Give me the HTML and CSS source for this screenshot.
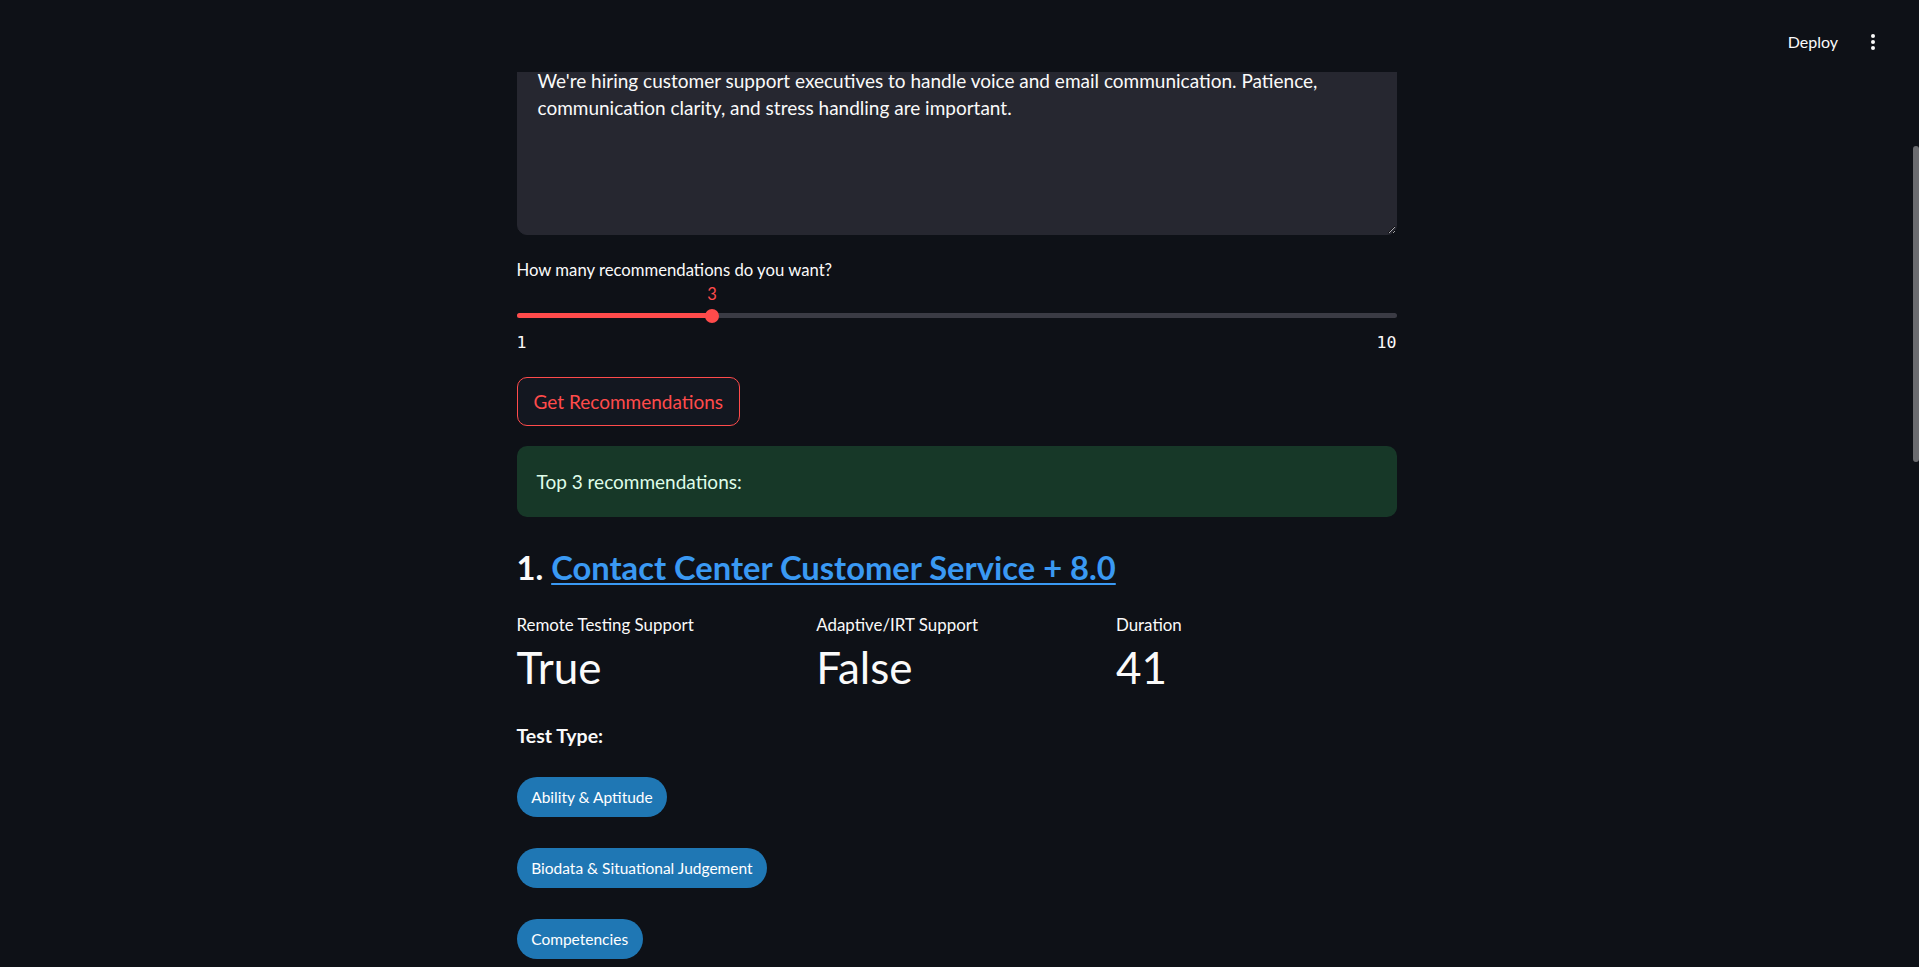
FILE: index.html
```html
<!DOCTYPE html>
<html lang="en">
<head>
<meta charset="utf-8">
<title>Assessment Recommender</title>
<link rel="stylesheet" href="styles.css">
</head>
<body>
<div class="app">
  <header class="topbar">
    <span class="deploy">Deploy</span>
    <svg class="kebab" width="24" height="24" viewBox="0 0 24 24" aria-hidden="true">
      <circle cx="12" cy="6" r="2" fill="#fafafa"/>
      <circle cx="12" cy="12" r="2" fill="#fafafa"/>
      <circle cx="12" cy="18" r="2" fill="#fafafa"/>
    </svg>
  </header>
  <main class="main">
    <div class="block">
      <textarea class="textarea" readonly>We're hiring customer support executives to handle voice and email communication. Patience, communication clarity, and stress handling are important.</textarea>

      <label class="label">How many recommendations do you want?</label>
      <div class="slider">
        <div class="track">
          <div class="fill" style="width:22.22%"></div>
          <div class="thumb" style="left:22.22%"><span class="thumb-value">3</span></div>
        </div>
        <div class="ticks"><span>1</span><span>10</span></div>
      </div>

      <button class="btn">Get Recommendations</button>

      <div class="alert">Top 3 recommendations:</div>

      <h3 class="title">1. <a class="title-link" href="#">Contact Center Customer Service + 8.0</a></h3>

      <div class="metrics">
        <div class="metric">
          <div class="metric-label">Remote Testing Support</div>
          <div class="metric-value">True</div>
        </div>
        <div class="metric">
          <div class="metric-label">Adaptive/IRT Support</div>
          <div class="metric-value">False</div>
        </div>
        <div class="metric">
          <div class="metric-label">Duration</div>
          <div class="metric-value">41</div>
        </div>
      </div>

      <p class="section">Test Type:</p>
      <div class="pills">
        <span class="pill">Ability &amp; Aptitude</span>
        <span class="pill">Biodata &amp; Situational Judgement</span>
        <span class="pill">Competencies</span>
      </div>
    </div>
  </main>
</div>
<div class="scrollbar"><div class="scroll-thumb"></div></div>
</body>
</html>
```

FILE: styles.css
```css
* { box-sizing: border-box; }

html, body {
  margin: 0;
  height: 100%;
  overflow: hidden;
  background: #0e1117;
}

body {
  display: flex;
  font-family: Lato, "Noto Sans", sans-serif;
  color: #fafafa;
}

.app {
  flex: 1;
  position: relative;
  height: 100%;
}

.topbar {
  position: absolute;
  top: 0;
  left: 0;
  right: 0;
  height: 72px;
  padding: 12px 28px 0 0;
  background: #0e1117;
  display: flex;
  justify-content: flex-end;
  align-items: center;
  gap: 23px;
  z-index: 2;
}

.deploy {
  font-size: 16px;
  line-height: 22px;
  color: #fafafa;
}

.kebab { display: block; }

.main {
  padding-top: 46px;
}

.block {
  width: 880px;
  margin: 0 auto;
  display: flex;
  flex-direction: column;
  align-items: stretch;
}

.textarea {
  display: block;
  width: 100%;
  height: 189px;
  padding: 20px;
  border: 1px solid #262730;
  border-radius: 10px;
  background: #262730;
  color: #fafafa;
  font-family: Lato, "Noto Sans", sans-serif;
  font-size: 19px;
  line-height: 27px;
  resize: vertical;
  outline: none;
  color-scheme: dark;
}

.label {
  display: block;
  margin-top: 24px;
  font-size: 16.7px;
  line-height: 22px;
}

.slider {
  margin-top: 32px;
}

.track {
  position: relative;
  height: 5px;
  border-radius: 3px;
  background: #3a3b44;
}

.fill {
  height: 100%;
  border-radius: 3px;
  background: #ff4b4b;
}

.thumb {
  position: absolute;
  top: -4.5px;
  width: 14px;
  height: 14px;
  margin-left: -7px;
  border-radius: 50%;
  background: #ff4b4b;
}

.thumb-value {
  position: absolute;
  left: 50%;
  top: -25px;
  transform: translateX(-50%);
  font-size: 16.5px;
  line-height: 20px;
  color: #ff4b4b;
}

.ticks {
  margin-top: 14px;
  display: flex;
  justify-content: space-between;
  font-family: "DejaVu Sans Mono", "Liberation Mono", monospace;
  font-size: 16.6px;
  line-height: 22px;
}

.btn {
  align-self: flex-start;
  margin-top: 23px;
  height: 49px;
  padding: 0 16px;
  border: 1px solid #ff4b4b;
  border-radius: 10px;
  background: #131720;
  color: #ff4b4b;
  font-family: Lato, "Noto Sans", sans-serif;
  font-size: 19px;
}

.alert {
  margin-top: 20px;
  padding: 20px 20px 20px;
  border-radius: 10px;
  background: #173828;
  color: #dffde9;
  font-size: 19px;
  line-height: 31px;
}

.title {
  margin: 31px 0 0;
  font-size: 32.7px;
  line-height: 40px;
  font-weight: 700;
}

.title-link {
  color: #3a99f3;
  text-decoration: underline;
  text-decoration-thickness: 2px;
  text-underline-offset: 3px;
}

.metrics {
  margin-top: 25.5px;
  display: grid;
  grid-template-columns: repeat(3, 1fr);
  column-gap: 19.2px;
}

.metric-label {
  font-size: 16.9px;
  line-height: 22px;
}

.metric-value {
  margin-top: 5px;
  font-size: 44px;
  line-height: 52px;
}

.section {
  margin: 29.6px 0 0;
  font-size: 19.5px;
  line-height: 27px;
  font-weight: 700;
}

.pills {
  margin-top: 28px;
  display: flex;
  flex-direction: column;
  align-items: flex-start;
  gap: 30.6px;
}

.pill {
  display: inline-flex;
  align-items: center;
  height: 40.4px;
  padding: 0 14.7px;
  border-radius: 20px;
  background: #1f77b4;
  color: #ffffff;
  font-size: 15.5px;
}

.scrollbar {
  width: 6px;
  height: 100%;
  flex: none;
}

.scroll-thumb {
  margin-top: 146px;
  height: 316px;
  border-radius: 3px;
  background: #6b6c70;
}
```
